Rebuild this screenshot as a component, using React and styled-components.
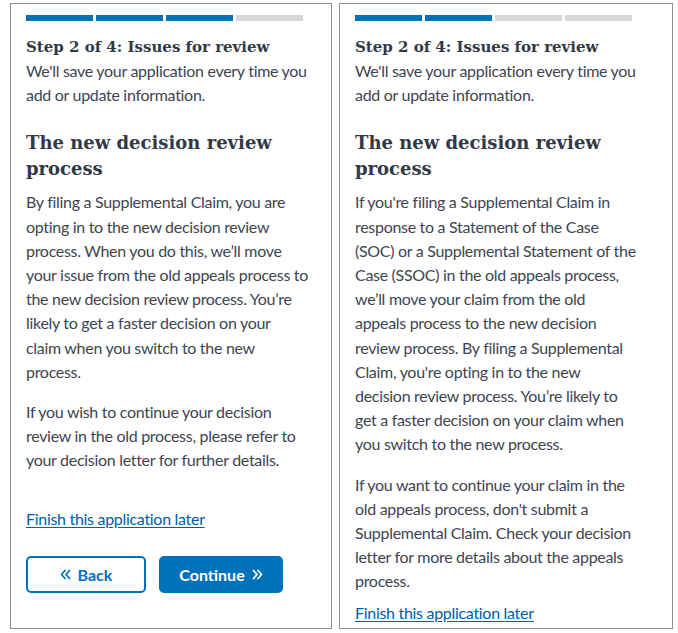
import React from "react";
import styled, { createGlobalStyle } from "styled-components";

const Global = createGlobalStyle`
  html, body { margin: 0; padding: 0; background: #ffffff; }
  body { font-family: Lato, "Liberation Sans", sans-serif; }
  * { box-sizing: border-box; }
`;

const Page = styled.div`
  display: flex;
  align-items: flex-start;
  gap: 7px;
  padding: 3px 0 0 10px;
`;

const Panel = styled.section`
  width: ${(p) => p.$w}px;
  height: 626px;
  border: 1px solid #8f8f8f;
  padding: 11px 15px 0 15px;
  overflow: hidden;
`;

const Content = styled.div`
  width: 290px;
`;

const Bars = styled.div`
  display: flex;
  gap: 3px;
  width: 277px;
`;

const Bar = styled.div`
  flex: 1;
  height: 6px;
  background: ${(p) => (p.$on ? "#0071bb" : "#d6d7d9")};
`;

const StepTitle = styled.h2`
  margin: 14px 0 0;
  font-family: "DejaVu Serif", serif;
  font-weight: 700;
  font-size: 15px;
  line-height: 24px;
  color: #323a45;
`;

const Text = styled.p`
  margin: 0 0 ${(p) => p.$gap ?? 16}px;
  font-size: 16px;
  letter-spacing: -0.3px;
  line-height: 24.2px;
  color: #3d4551;
  white-space: nowrap;
`;

const Heading = styled.h1`
  margin: 23px 0 8px;
  font-family: "DejaVu Serif", serif;
  font-weight: 700;
  font-size: 18px;
  line-height: 26px;
  color: #323a45;
`;

const Link = styled.a`
  display: block;
  width: fit-content;
  font-size: 16px;
  letter-spacing: -0.3px;
  line-height: 24px;
  color: #005ea2;
  text-decoration: underline;
  text-underline-offset: 2px;
`;

const Buttons = styled.div`
  display: flex;
  gap: 13px;
  margin-top: 25px;
`;

const Button = styled.button`
  display: flex;
  align-items: center;
  justify-content: center;
  gap: 7px;
  width: ${(p) => p.$w}px;
  height: 37px;
  border-radius: 5px;
  border: 2px solid #0071bb;
  background: ${(p) => (p.$primary ? "#0071bb" : "#ffffff")};
  color: ${(p) => (p.$primary ? "#ffffff" : "#0071bb")};
  font-family: Lato, "Liberation Sans", sans-serif;
  font-weight: 700;
  font-size: 16px;
  padding: 0;
`;

const Chevrons = ({ dir }) => (
  <svg width="11" height="11" viewBox="0 0 11 11" aria-hidden="true">
    <g
      fill="none"
      stroke="currentColor"
      strokeWidth="1.8"
      strokeLinecap="round"
      strokeLinejoin="round"
      transform={dir === "left" ? "" : "translate(11 0) scale(-1 1)"}
    >
      <path d="M5 1.5 1.5 5.5 5 9.5" />
      <path d="M9.5 1.5 6 5.5 9.5 9.5" />
    </g>
  </svg>
);

const Lines = ({ lines, gap }) => (
  <Text $gap={gap}>
    {lines.map((l, i) => (
      <React.Fragment key={i}>
        {i > 0 && <br />}
        {l}
      </React.Fragment>
    ))}
  </Text>
);

const Header = ({ filled }) => (
  <>
    <Bars>
      {[0, 1, 2, 3].map((i) => (
        <Bar key={i} $on={i < filled} />
      ))}
    </Bars>
    <StepTitle>Step 2 of 4: Issues for review</StepTitle>
    <Lines gap={0} lines={["We'll save your application every time you", "add or update information."]} />
    <Heading>The new decision review process</Heading>
  </>
);

export default function App() {
  return (
    <>
      <Global />
      <Page>
        <Panel $w={322}>
          <Content>
            <Header filled={3} />
            <Lines
              lines={[
                "By filing a Supplemental Claim, you are",
                "opting in to the new decision review",
                "process. When you do this, we’ll move",
                "your issue from the old appeals process to",
                "the new decision review process. You’re",
                "likely to get a faster decision on your",
                "claim when you switch to the new",
                "process.",
              ]}
            />
            <Lines
              gap={34}
              lines={[
                "If you wish to continue your decision",
                "review in the old process, please refer to",
                "your decision letter for further details.",
              ]}
            />
            <Link href="#">Finish this application later</Link>
            <Buttons>
              <Button $w={120}>
                <Chevrons dir="left" />
                Back
              </Button>
              <Button $w={124} $primary>
                Continue
                <Chevrons dir="right" />
              </Button>
            </Buttons>
          </Content>
        </Panel>
        <Panel $w={334}>
          <Content>
            <Header filled={2} />
            <Lines
              lines={[
                "If you're filing a Supplemental Claim in",
                "response to a Statement of the Case",
                "(SOC) or a Supplemental Statement of the",
                "Case (SSOC) in the old appeals process,",
                "we’ll move your claim from the old",
                "appeals process to the new decision",
                "review process. By filing a Supplemental",
                "Claim, you're opting in to the new",
                "decision review process. You’re likely to",
                "get a faster decision on your claim when",
                "you switch to the new process.",
              ]}
            />
            <Lines
              gap={7}
              lines={[
                "If you want to continue your claim in the",
                "old appeals process, don't submit a",
                "Supplemental Claim. Check your decision",
                "letter for more details about the appeals",
                "process.",
              ]}
            />
            <Link href="#">Finish this application later</Link>
          </Content>
        </Panel>
      </Page>
    </>
  );
}
